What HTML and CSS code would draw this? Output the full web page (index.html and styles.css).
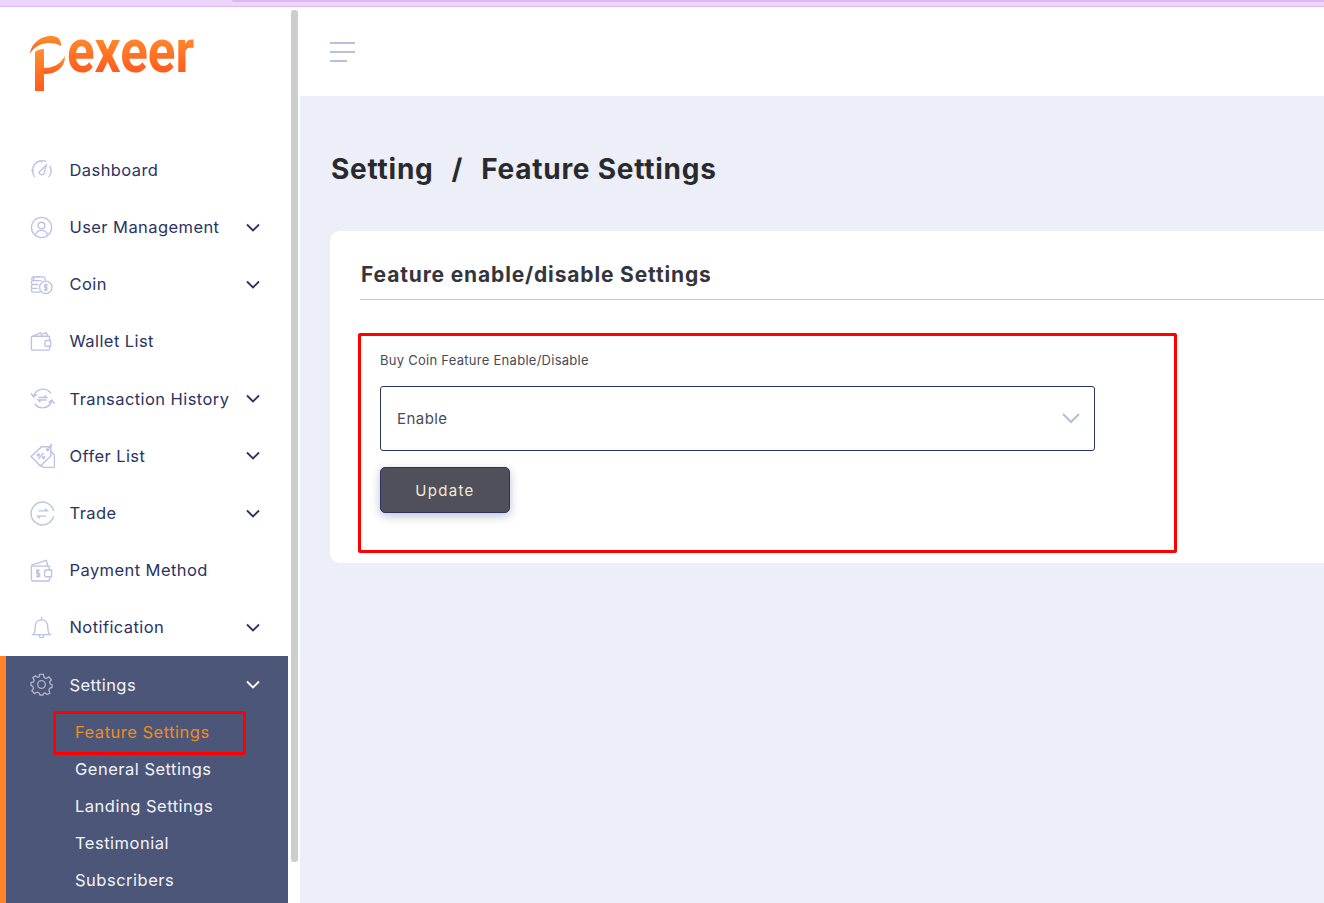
FILE: index.html
```html
<!DOCTYPE html>
<html lang="en">
  <head>
    <meta charset="UTF-8" />
    <meta name="viewport" content="width=device-width, initial-scale=1.0" />
    <title>Feature Settings</title>
    <link rel="stylesheet" href="styles.css">
  </head>
  <body>
    <div class="top-strip"><div class="top-tab"></div></div>

    <div class="layout">
      <aside class="sidebar">
        <div class="sidebar-inner">
          <div class="logo">
            <svg class="logo-mark" width="38" height="56" viewBox="0 0 38 56">
              <defs>
                <linearGradient id="logoGrad" x1="0" y1="0" x2="0" y2="1">
                  <stop offset="0" stop-color="#ff9030" />
                  <stop offset="1" stop-color="#ff5a1c" />
                </linearGradient>
              </defs>
              <path fill="url(#logoGrad)" d="M0 18C1 7 11 0 21 0C27 0 31 2 31 10C28 8 24 7 19 7C10 7 4 11 0 18Z" />
              <path fill="url(#logoGrad)" d="M5 16C7 14 10 13 14 13V55H5Z" />
              <path fill="url(#logoGrad)" d="M14 32C22 32 30 29 35 20C35 32 26 38 14 38Z" />
            </svg>
            <span class="logo-text">exeer</span>
          </div>

          <nav class="menu">
            <a class="menu-item">
              <svg class="menu-icon" viewBox="0 0 24 24"><path d="M5 20A10.5 10.5 0 0 1 17 3.500M20.500 8A10.5 10.5 0 0 1 19.500 20" /><path d="M9.500 14.500L17 7.500L14.500 16.500A2.800 2.800 0 0 1 9.500 14.500Z" /><path d="M1.500 13H4M12 3V5" /></svg>
              <span class="menu-label">Dashboard</span>
            </a>
            <a class="menu-item">
              <svg class="menu-icon" viewBox="0 0 24 24"><circle cx="12" cy="12" r="10.5" /><circle cx="12" cy="10" r="3.5" /><path d="M5.500 19.500C7 16 9 15 12 15C15 15 17 16 18.500 19.500" /></svg>
              <span class="menu-label">User Management</span>
              <svg class="chevron" viewBox="0 0 14 9"><path d="M1 1.500L7 7.500L13 1.500" /></svg>
            </a>
            <a class="menu-item">
              <svg class="menu-icon" viewBox="0 0 24 24"><path d="M10 4H3C1.500 4 1.500 8 3 8H12M4 4V8M3 8C1 8 1 12 3 12H9M3 12C1 12 1 16 3 16H8M3 16C1 16 1 20 3 20H11" /><path d="M3 4H14C16 4 16 7 15.500 8" /><circle cx="16.500" cy="15" r="6.500" /><path d="M18.500 12.500H15.500V15H17.500V17.500H14.500M16.500 11V19" /></svg>
              <span class="menu-label">Coin</span>
              <svg class="chevron" viewBox="0 0 14 9"><path d="M1 1.500L7 7.500L13 1.500" /></svg>
            </a>
            <a class="menu-item">
              <svg class="menu-icon" viewBox="0 0 24 24"><path d="M19 21H3C2 21 1.500 20.500 1.500 19.500V8C1.500 7 2 6.500 3 6.500H19C20 6.500 20.500 7 20.500 8V11M20.500 17V19.500C20.500 20.500 20 21 19 21" /><path d="M3 6.500L11 3L13 6.500M13 4L17 3L19 6.500" /><path d="M21.500 11H17C15 11 15 17 17 17H21.500Z" /></svg>
              <span class="menu-label">Wallet List</span>
            </a>
            <a class="menu-item">
              <svg class="menu-icon wide" viewBox="0 0 24 24"><path d="M3.500 10C5 5.500 8.500 3 12.500 3C16 3 18.500 4.500 20 7M21 14C19.500 18.500 16 21 12 21C8.500 21 6 19.500 4.500 17" /><path d="M1 7L3.500 10.500L6.500 8M23.500 17L21 13.500L18 16" /><path d="M8 11H16L14 9M16 13.500H8L10 15.500" /></svg>
              <span class="menu-label">Transaction History</span>
              <svg class="chevron" viewBox="0 0 14 9"><path d="M1 1.500L7 7.500L13 1.500" /></svg>
            </a>
            <a class="menu-item">
              <svg class="menu-icon wide" viewBox="0 0 24 24"><path d="M1 13L11 3.500H20V12.500L10 22Z" /><path d="M20 8L23.500 11.500V22.500C23.500 23 23 23.500 22.500 23.500H13L10.500 21.500" /><circle cx="17" cy="6.500" r="1" /><path d="M18 5L21 1M8 15.500L13 9.500" /><circle cx="8" cy="11.500" r="1" /><circle cx="13" cy="14" r="1" /></svg>
              <span class="menu-label">Offer List</span>
              <svg class="chevron" viewBox="0 0 14 9"><path d="M1 1.500L7 7.500L13 1.500" /></svg>
            </a>
            <a class="menu-item">
              <svg class="menu-icon wide" viewBox="0 0 24 24"><path d="M22.800 9.500C21.500 4.500 17 1 12 1C6 1 1 6 1 12C1 18 6 23 12 23C17 23 21.500 19.500 22.800 14.500" /><path d="M8 9.500H16.500L14.500 7.500M15.500 14.500H7.500L9.500 16.500" /></svg>
              <span class="menu-label">Trade</span>
              <svg class="chevron" viewBox="0 0 14 9"><path d="M1 1.500L7 7.500L13 1.500" /></svg>
            </a>
            <a class="menu-item">
              <svg class="menu-icon" viewBox="0 0 24 24"><path d="M20 12V7.500H3C2 7.500 1.500 7 1.500 6.500V21.500C1.500 22.500 2 23 3 23H19C20 23 20.500 22.500 20.500 21.500V18.500" /><path d="M1.500 6.500L17 1.500L18.500 7.500" /><path d="M22.500 11.500H17C14.500 11.500 14.500 18.500 17 18.500H22.500Z" /><path d="M10 12H7V15H10V18H6.500M8.300 10.500V19.500" /></svg>
              <span class="menu-label">Payment Method</span>
            </a>
            <a class="menu-item">
              <svg class="menu-icon" viewBox="0 0 24 24"><path d="M3 19.500C5.500 17.500 5.500 14 5.500 11C5.500 7 8 4 12 4C16 4 18.500 7 18.500 11C18.500 14 18.500 17.500 21 19.500Z" /><path d="M12 1V4M9.500 19.500C9.500 23.500 14.500 23.500 14.500 19.500" /></svg>
              <span class="menu-label">Notification</span>
              <svg class="chevron" viewBox="0 0 14 9"><path d="M1 1.500L7 7.500L13 1.500" /></svg>
            </a>

            <div class="menu-group">
              <a class="menu-item">
                <svg class="menu-icon" viewBox="0 0 24 24"><circle cx="12" cy="12" r="4" /><path d="M10 1.500H14L14.700 4.700L17 5.700L19.700 4L22.300 7L20.500 9.500L21.300 11.500L23 12.500V15L20.500 16L19.700 18L20.700 21L18 22.500L15.500 20.700L14 21.500L13.500 23H10.500L9.500 20.800L7.500 20L4.500 21.500L2 18.500L3.700 16L3 14L1 13V10L3.500 9.500L4.300 7.500L3 4.800L5.700 3L8 4.500L9.500 4Z" /></svg>
                <span class="menu-label">Settings</span>
                <svg class="chevron" viewBox="0 0 14 9"><path d="M1 1.500L7 7.500L13 1.500" /></svg>
              </a>
              <div class="submenu">
                <a class="submenu-item current">Feature Settings<span class="mark-box"></span></a>
                <a class="submenu-item">General Settings</a>
                <a class="submenu-item">Landing Settings</a>
                <a class="submenu-item">Testimonial</a>
                <a class="submenu-item">Subscribers</a>
              </div>
            </div>
          </nav>
        </div>
        <div class="scroll-thumb"></div>
      </aside>

      <div class="main">
        <header class="main-header">
          <div class="menu-toggle">
            <span></span>
            <span></span>
            <span class="short"></span>
          </div>
        </header>

        <section class="content">
          <h1 class="page-title">Setting<span class="sep">/</span>Feature Settings</h1>

          <div class="card">
            <h2 class="card-title">Feature enable/disable Settings</h2>

            <form class="mark-form">
              <label class="field-label" for="buyCoin">Buy Coin Feature Enable/Disable</label>
              <div class="select-wrap">
                <select class="select" id="buyCoin">
                  <option>Enable</option>
                  <option>Disable</option>
                </select>
                <svg class="select-arrow" viewBox="0 0 18 12"><path d="M1 2L9 10L17 2" /></svg>
              </div>
              <button class="update-button" type="button">Update</button>
            </form>
          </div>
        </section>
      </div>
    </div>
  </body>
</html>
```

FILE: styles.css
```css
/* Basic reset */
* {
  margin: 0;
  padding: 0;
  box-sizing: border-box;
}

body {
  font-family: Inter, "Noto Sans", sans-serif;
  background-color: #fff;
  color: #2b3362;
  height: 100vh;
  overflow: hidden;
}

.top-strip {
  height: 7px;
  background-color: #ecd4fb;
  border-bottom: 1px solid #e2b9f8;
}

.top-tab {
  height: 2px;
  margin-left: 232px;
  background-color: #dcb8f2;
  border-bottom-left-radius: 3px;
}

.layout {
  display: flex;
  height: calc(100vh - 7px);
}

/* Sidebar */
.sidebar {
  display: flex;
  flex: none;
  width: 300px;
  overflow: hidden;
}

.sidebar-inner {
  flex: none;
  width: 288px;
}

.scroll-thumb {
  flex: none;
  width: 7px;
  height: 852px;
  margin: 3px 0 0 3px;
  background-color: #cdcdcd;
  border-radius: 3px;
}

.logo {
  display: flex;
  align-items: flex-start;
  height: 134.3px;
  padding: 29px 0 0 30px;
}

.logo-mark {
  flex: none;
}

.logo-text {
  margin: -16px 0 0 -1px;
  font-family: Roboto, sans-serif;
  font-size: 62px;
  line-height: 62px;
  font-weight: 700;
  transform: scaleX(0.825);
  transform-origin: left top;
  background: linear-gradient(#ff9030 20%, #ff5a1c 85%);
  -webkit-background-clip: text;
  background-clip: text;
  color: transparent;
}

.menu-item {
  display: flex;
  align-items: center;
  height: 57.2px;
  padding-left: 30px;
  padding-right: 28px;
  font-size: 16.5px;
  letter-spacing: 0.42px;
}

.menu-icon {
  flex: none;
  width: 23px;
  height: 23px;
  margin-right: 16.5px;
  fill: none;
  stroke: #bcc2e2;
  stroke-width: 1.4;
}

.menu-icon.wide {
  width: 25px;
  height: 25px;
  margin-right: 14.5px;
}

.menu-label {
  flex-grow: 1;
  white-space: nowrap;
}

.chevron {
  flex: none;
  width: 14px;
  height: 9px;
  fill: none;
  stroke: #2b3362;
  stroke-width: 1.8;
}

/* Active group */
.menu-group {
  min-height: 300px;
  background-color: #4c5678;
  border-left: 6px solid #ff8427;
  color: #f3f4fa;
}

.menu-group .menu-item {
  padding-left: 24px;
}

.menu-group .menu-icon {
  stroke: #aeb3cc;
}

.menu-group .chevron {
  stroke: #fff;
}

.submenu-item {
  position: relative;
  display: flex;
  align-items: center;
  height: 37px;
  padding-left: 69px;
  font-size: 16.5px;
  letter-spacing: 0.5px;
}

.submenu-item.current {
  color: #ef8c20;
}

.mark-box {
  position: absolute;
  left: 47px;
  top: -2px;
  width: 193px;
  height: 44px;
  border: 3px solid #f00;
  border-radius: 2px;
}

/* Main area */
.main {
  flex-grow: 1;
  min-width: 0;
  overflow: hidden;
  display: flex;
  flex-direction: column;
}

.main-header {
  flex: none;
  height: 89px;
  padding: 35px 0 0 30px;
}

.menu-toggle span {
  display: block;
  width: 25px;
  height: 2px;
  margin-bottom: 7px;
  background-color: #bcbfdc;
}

.menu-toggle .short {
  width: 17px;
}

.content {
  flex-grow: 1;
  padding: 53px 0 0 30px;
  background-color: #eceff8;
}

.page-title {
  font-size: 28px;
  line-height: 40px;
  font-weight: 700;
  letter-spacing: 0.75px;
  color: #2a2a2e;
  margin-bottom: 42px;
  padding-left: 1px;
}

.sep {
  margin: 0 18px;
}

.card {
  margin-right: -30px;
  padding: 31px 30px 10px;
  background-color: #fff;
  border-radius: 10px;
}

.card-title {
  font-size: 21px;
  line-height: 26px;
  font-weight: 700;
  letter-spacing: 0.85px;
  color: #35353d;
  padding-left: 1px;
  padding-bottom: 11px;
  border-bottom: 1px solid #c9c9cd;
}

.mark-form {
  width: 819px;
  height: 220px;
  margin: 33px 0 0 -2px;
  padding: 14px 19px 0;
  border: 3px solid #f00;
  border-radius: 2px;
}

.field-label {
  display: block;
  font-size: 13px;
  line-height: 20px;
  letter-spacing: 0.27px;
  color: #4a4a55;
  margin-bottom: 16px;
}

.select-wrap {
  position: relative;
  width: 715px;
  margin-bottom: 16px;
}

.select {
  display: block;
  width: 100%;
  height: 65px;
  padding-left: 16px;
  font-family: inherit;
  font-size: 15px;
  letter-spacing: 0.45px;
  color: #4a4a55;
  background-color: #fff;
  border: 1px solid #2b3362;
  border-radius: 3px;
  appearance: none;
}

.select-arrow {
  position: absolute;
  right: 15px;
  top: 26px;
  width: 18px;
  height: 12px;
  fill: none;
  stroke: #b4bbd8;
  stroke-width: 2;
}

.update-button {
  display: block;
  width: 130px;
  height: 46px;
  font-family: inherit;
  font-size: 15px;
  letter-spacing: 1.3px;
  color: #f3e9dc;
  background-color: #4f5059;
  border: 1px solid #2b3362;
  border-radius: 5px;
  box-shadow: 0 3px 10px rgba(43, 51, 98, 0.3);
}
```
